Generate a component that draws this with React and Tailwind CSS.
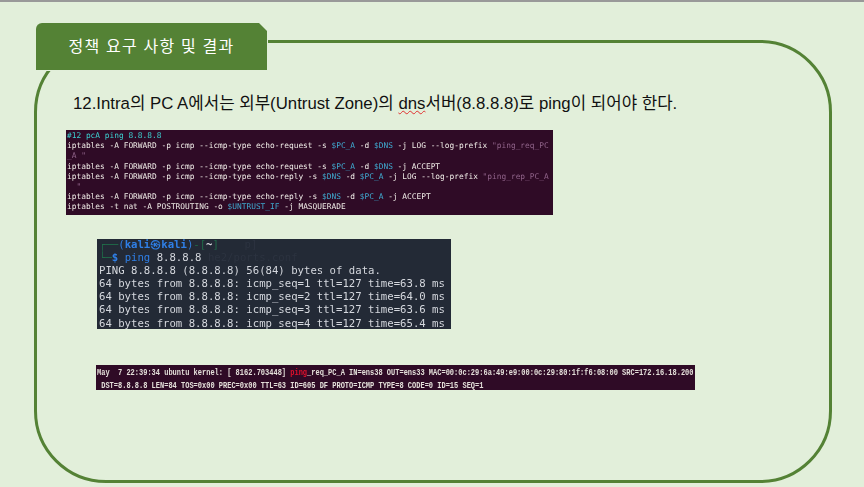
import React from 'react';

const v = 'text-[#3fa9cf]';
const s = 'text-[#8f6288]';

function Rule({ src, dst, tail, str }) {
  return (
    <>
      {tail} -s <span className={v}>{src}</span> -d <span className={v}>{dst}</span> -j {str ? <>LOG --log-prefix <span className={s}>{str}</span></> : 'ACCEPT'}
    </>
  );
}

function RuleBlock() {
  return (
    <div className="ml-[29px] mt-[14px] w-[487px] h-[85px] bg-[#2f0b26] overflow-hidden pl-px pt-px font-['DejaVu_Sans_Mono',monospace] text-[7.85px] leading-[10.2px] text-[#efebe6] whitespace-pre blur-[0.2px]">
      <div className="text-[#3ccfcf]">#12 pcA ping 8.8.8.8</div>
      <div><Rule tail="iptables -A FORWARD -p icmp --icmp-type echo-request" src="$PC_A" dst="$DNS" str='"ping_req_PC' /></div>
      <div className={s}>_A "</div>
      <div><Rule tail="iptables -A FORWARD -p icmp --icmp-type echo-request" src="$PC_A" dst="$DNS" /></div>
      <div><Rule tail="iptables -A FORWARD -p icmp --icmp-type echo-reply" src="$DNS" dst="$PC_A" str='"ping_rep_PC_A' /></div>
      <div className={s}>  "</div>
      <div><Rule tail="iptables -A FORWARD -p icmp --icmp-type echo-reply" src="$DNS" dst="$PC_A" /></div>
      <div>iptables -t nat -A POSTROUTING -o <span className={v}>$UNTRUST_IF</span> -j MASQUERADE</div>
    </div>
  );
}

function KaliBlock() {
  return (
    <div className="ml-[60px] mt-[24px] w-[354px] h-[90px] bg-[#232a36] overflow-hidden pl-[2px] font-['DejaVu_Sans_Mono',monospace] text-[10.65px] leading-[13.1px] text-[#d5d8de] whitespace-pre blur-[0.35px]">
      <div className="-mt-px text-[#1f6b48]">┌──<span className="text-[#2f7fe6]">(<b>kali㉿kali</b>)</span>-[<b className="text-[#d5d8de]">~</b>]<span className="text-[#2c3340]">    p]</span></div>
      <div className="text-[#1f6b48]">└─<b className="text-[#2f7fe6]">$</b> <span className="text-[#2f7fe6]">ping</span> <span className="text-[#d5d8de]">8.8.8.8</span><span className="text-[#2c3340]"> he2/ports.conf</span></div>
      <div>PING 8.8.8.8 (8.8.8.8) 56(84) bytes of data.</div>
      <div>64 bytes from 8.8.8.8: icmp_seq=1 ttl=127 time=63.8 ms</div>
      <div>64 bytes from 8.8.8.8: icmp_seq=2 ttl=127 time=64.0 ms</div>
      <div>64 bytes from 8.8.8.8: icmp_seq=3 ttl=127 time=63.6 ms</div>
      <div>64 bytes from 8.8.8.8: icmp_seq=4 ttl=127 time=65.4 ms</div>
    </div>
  );
}

function LogBlock() {
  return (
    <div className="ml-[59px] mt-[36px] w-[599px] h-[25px] bg-[#2f0b26] overflow-hidden pl-px pt-px font-['Liberation_Mono',monospace] font-bold text-[7px] leading-[13px] text-[#e4e0da] whitespace-pre blur-[0.2px]">
      <div className="origin-left scale-y-[1.35]">May  7 22:39:34 ubuntu kernel: [ 8162.703448] <span className="text-[#e3102c]">ping</span>_req_PC_A IN=ens38 OUT=ens33 MAC=00:0c:29:6a:49:e9:00:0c:29:80:1f:f6:08:00 SRC=172.16.18.200</div>
      <div className="origin-left scale-y-[1.35]"> DST=8.8.8.8 LEN=84 TOS=0x00 PREC=0x00 TTL=63 ID=605 DF PROTO=ICMP TYPE=8 CODE=0 ID=15 SEQ=1</div>
    </div>
  );
}

export default function App() {
  return (
    <div className="w-[864px] h-[487px] bg-[#e2efda] overflow-hidden font-['Liberation_Sans','Noto_Sans_CJK_KR',sans-serif]">
      <div className="h-[2px] bg-[#999999]" />

      <div className="relative ml-[34px] mt-[38px] w-[798px] h-[443px] border-[3px] border-[#548235] rounded-[72px]">
        {/* tab sits on top of the frame line */}
        <div className="absolute left-[-1px] top-[-20px] pr-px pb-px bg-[#e2efda]">
          <div className="w-[231px] h-[47px] bg-[#548235] rounded-tl-[6px] [clip-path:polygon(0_0,223px_0,231px_8px,231px_47px,0_47px)] flex items-center justify-center text-white text-[16px] tracking-[1.2px]">
            정책 요구 사항 및 결과
          </div>
        </div>

        <div className="pt-[49px] pl-[36px] h-[24px] box-content text-[16.8px] leading-[24px] text-[#111111] whitespace-pre">
          12.Intra의 PC A에서는 외부(Untrust Zone)의 <span className="underline decoration-wavy decoration-[#e03030] decoration-1">dns</span>서버(8.8.8.8)로 ping이 되어야 한다.
        </div>

        <RuleBlock />
        <KaliBlock />
        <LogBlock />
      </div>
    </div>
  );
}
